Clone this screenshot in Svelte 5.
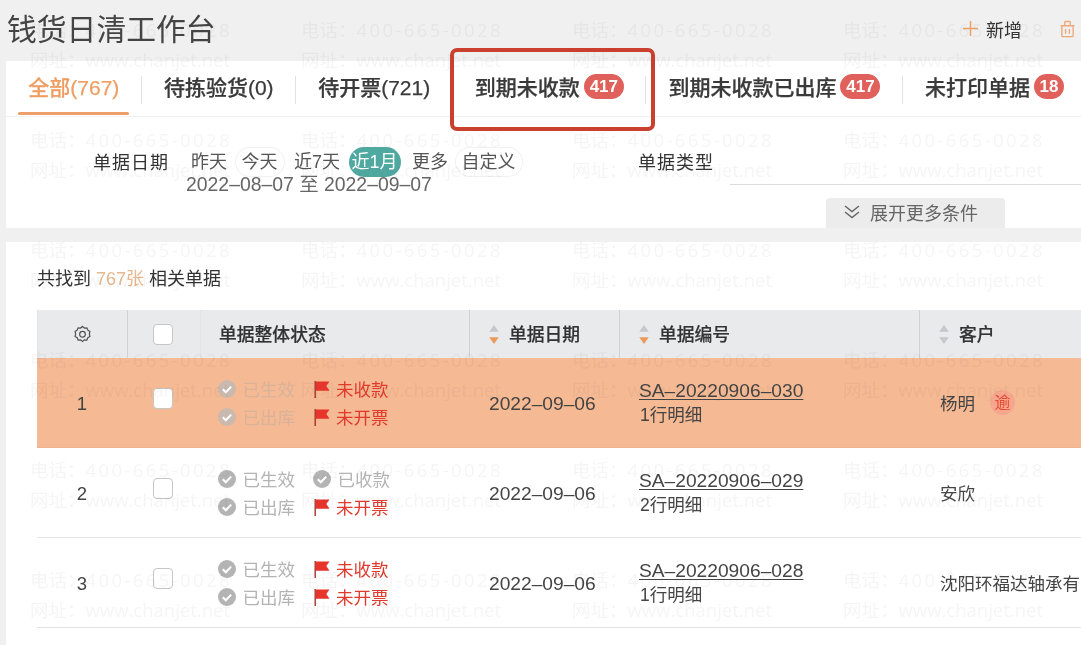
<script>
  const tabs = [
    { label: '全部(767)', active: true },
    { label: '待拣验货(0)' },
    { label: '待开票(721)', plain: true },
    { label: '到期未收款', badge: '417', boxed: true },
    { label: '到期未收款已出库', badge: '417' },
    { label: '未打印单据', badge: '18', plain: true }
  ];
  const ranges = [
    { t: '昨天' }, { t: '今天', ring: true }, { t: '近7天' },
    { t: '近1月', on: true }, { t: '更多' }, { t: '自定义', ring: true }
  ];
  const rows = [
    { n: 1, hot: true, a: ['已生效', true], b: ['未收款', false], c: ['已出库', true], d: ['未开票', false], no: 'SA–20220906–030', sub: '1行明细', cust: '杨明', late: true },
    { n: 2, a: ['已生效', true], b: ['已收款', true], c: ['已出库', true], d: ['未开票', false], no: 'SA–20220906–029', sub: '2行明细', cust: '安欣' },
    { n: 3, a: ['已生效', true], b: ['未收款', false], c: ['已出库', true], d: ['未开票', false], no: 'SA–20220906–028', sub: '1行明细', cust: '沈阳环福达轴承有限公司' }
  ];
  const marks = Array.from({ length: 24 });
</script>

{#snippet chip(item)}
  <span class="chip" class:done={item[1]} class:todo={!item[1]}>
    {#if item[1]}
      <svg class="mark" viewBox="0 0 18 18"><circle cx="9" cy="9" r="9" fill="currentColor" /><path d="M4.8 9.2l3 3 5.4-5.6" fill="none" stroke="#fff" stroke-width="2" /></svg>
    {:else}
      <svg class="mark" viewBox="0 0 18 18"><path d="M2.2 1v17" stroke="#a8322a" stroke-width="1.4" /><path d="M3 1.5h13.5l-3.2 4.6 3.2 4.6H3z" fill="#e8352b" /></svg>
    {/if}
    <span class="chip-text">{item[0]}</span>
  </span>
{/snippet}

{#snippet sorter(active)}
  <svg class="sort" viewBox="0 0 12 22">
    <path d="M6 1l5 7H1z" fill="#c4c8cc" />
    <path d="M6 21l5-7H1z" fill={active ? '#ec9a5c' : '#c4c8cc'} />
  </svg>
{/snippet}

<div class="page">
  <header class="title">
    <h1>钱货日清工作台</h1>
    <div class="actions">
      <span class="add">
        <svg viewBox="0 0 15 15" stroke="#ee9f66" stroke-width="1.5"><path d="M7.5 0v15M0 7.5h15" /></svg>
        新增
      </span>
      <svg class="trash" viewBox="0 0 16 18" fill="none" stroke="#eea877" stroke-width="1.4">
        <path d="M2 5.5h12v10.7a1 1 0 0 1-1 1H3a1 1 0 0 1-1-1zM.6 5.5h14.8M5 5.5V2a1 1 0 0 1 1-1h4a1 1 0 0 1 1 1v3.5M6 9v5M10 9v5" />
      </svg>
    </div>
  </header>

  <section class="card">
    <nav class="tabs">
      {#each tabs as tab}
        <div class="tab" class:active={tab.active} class:plain={tab.plain}>
          {tab.label}
          {#if tab.badge}<b class="badge">{tab.badge}</b>{/if}
          {#if tab.boxed}<span class="callout"></span>{/if}
        </div>
      {/each}
    </nav>

    <div class="filters">
      <span class="flabel date-label">单据日期</span>
      <div class="dates">
        <div class="ranges">
          {#each ranges as r}
            <span class="range" class:on={r.on} class:ring={r.ring}>{r.t}</span>
          {/each}
        </div>
        <div class="span">2022–08–07 至 2022–09–07</div>
      </div>
      <span class="flabel type-label">单据类型</span>
      <div class="field"></div>
    </div>

    <div class="more-row">
      <div class="more">
        <svg viewBox="0 0 16 14" fill="none" stroke="#666" stroke-width="1.4"><path d="M1 1l7 5.5L15 1M1 7l7 5.5L15 7" /></svg>
        展开更多条件
      </div>
    </div>
  </section>

  <section class="panel">
    <p class="found">共找到 <em>767张</em> 相关单据</p>
    <div class="table">
      <div class="row head">
        <div class="cell c-num">
          <svg class="gear" viewBox="0 0 20 20" fill="none" stroke="#555" stroke-width="1.3">
            <path d="M10 1.5l2 1.7 2.6-.2 1 2.4 2.2 1.4-.6 2.6.6 2.6-2.2 1.4-1 2.4-2.6-.2-2 1.7-2-1.7-2.6.2-1-2.4-2.2-1.4.6-2.6-.6-2.6 2.2-1.4 1-2.4 2.6.2z" />
            <circle cx="10" cy="9.8" r="3" />
          </svg>
        </div>
        <div class="cell c-check"><span class="box filled"></span></div>
        <div class="cell c-status"><span>单据整体状态</span></div>
        <div class="cell c-date">{@render sorter(true)}<span>单据日期</span></div>
        <div class="cell c-no">{@render sorter(true)}<span>单据编号</span></div>
        <div class="cell c-cust">{@render sorter(false)}<span>客户</span></div>
      </div>

      {#each rows as row}
        <div class="row body" class:hot={row.hot}>
          <div class="cell c-num">{row.n}</div>
          <div class="cell c-check"><span class="box" class:filled={row.hot}></span></div>
          <div class="cell c-status">
            <div class="chips">
              {@render chip(row.a)}{@render chip(row.b)}{@render chip(row.c)}{@render chip(row.d)}
            </div>
          </div>
          <div class="cell c-date num">2022–09–06</div>
          <div class="cell c-no">
            <div class="doc">
              <a href="#doc">{row.no}</a>
              <span>{row.sub}</span>
            </div>
          </div>
          <div class="cell c-cust">
            {row.cust}
            {#if row.late}<span class="late">逾</span>{/if}
          </div>
        </div>
      {/each}
    </div>
  </section>

  <div class="watermarks" aria-hidden="true">
    {#each marks as _}
      <div class="wm"><span>电话：<i>400-665-0028</i></span><span>网址：www.chanjet.net</span></div>
    {/each}
  </div>
</div>

<style>
  :global(body) {
    margin: 0;
    background: #f0f0f0;
  }
  .page {
    position: relative;
    width: 1081px;
    height: 645px;
    overflow: hidden;
    background: #f0f0f0;
    color: #333;
    font-family: "Liberation Sans", "Noto Sans CJK SC", sans-serif;
    font-size: 17.5px;
    filter: blur(0.45px);
  }
  .title {
    height: 61px;
    display: flex;
    align-items: center;
    justify-content: space-between;
    padding: 0 6px 4px 7px;
    box-sizing: border-box;
  }
  h1 {
    margin: 0 0 4px;
    font-size: 29.8px;
    font-weight: 400;
    color: #444;
  }
  .actions {
    display: flex;
    align-items: center;
    gap: 38px;
  }
  .add {
    font-size: 18px;
    color: #333;
    display: flex;
    align-items: center;
    gap: 8px;
  }
  .add svg {
    width: 15px;
    height: 15px;
  }
  .trash {
    width: 15px;
    height: 18px;
  }
  .card {
    margin-left: 6px;
    height: 167px;
    background: #fff;
  }
  .tabs {
    display: flex;
    height: 55px;
    border-bottom: 1px solid #f1f1f1;
  }
  .tab {
    position: relative;
    display: flex;
    align-items: center;
    gap: 4px;
    padding: 0 22.3px 5px;
    font-size: 21px;
    font-weight: 500;
    color: #3a3a3a;
    white-space: nowrap;
    -webkit-text-stroke: 0.25px currentColor;
  }
  .tab::after {
    content: "";
    position: absolute;
    right: 0;
    top: 15px;
    height: 28px;
    width: 1px;
    background: #e2e2e2;
  }
  .tab.plain::after {
    display: none;
  }
  .tab.active {
    color: #ef9e63;
  }
  .tab.active::before {
    content: "";
    position: absolute;
    left: 12px;
    right: 13px;
    bottom: 1px;
    height: 3px;
    background: #ec9f68;
    border-radius: 2px;
  }
  .badge {
    min-width: 40px;
    box-sizing: border-box;
    padding: 0 5px;
    height: 25px;
    line-height: 25px;
    border-radius: 13px;
    text-align: center;
    background: #e0615b;
    color: #fff;
    font-size: 17px;
    font-weight: 700;
    -webkit-text-stroke: 0;
  }
  .tab:last-child .badge {
    min-width: 30px;
  }
  .callout {
    position: absolute;
    left: -3px;
    right: -9px;
    top: -13px;
    bottom: -15px;
    border: 4px solid #c9402f;
    border-radius: 7px;
  }
  .filters {
    height: 81px;
    display: flex;
    box-sizing: border-box;
    padding: 30px 0 0 87px;
  }
  .flabel {
    font-size: 18px;
    letter-spacing: 1px;
    height: 30px;
    line-height: 30px;
    color: #333;
    padding-top: 1px;
  }
  .date-label {
    width: 91px;
  }
  .dates {
    width: 454px;
  }
  .ranges {
    display: flex;
    gap: 2.5px;
  }
  .range {
    height: 30px;
    line-height: 30px;
    box-sizing: border-box;
    padding: 0 7px;
    border-radius: 15px;
    font-size: 18px;
    color: #555;
  }
  .range:first-child {
    padding-right: 5px;
  }
  .range:last-child {
    margin-left: -3px;
  }
  .range.ring {
    box-shadow: inset 0 0 0 1px #f1f1f1;
  }
  .range.on {
    background: #4fa9a0;
    color: #fff;
    padding: 0 3px;
    margin: 0 2px 0 -1px;
  }
  .span {
    margin-top: -3px;
    padding-left: 2px;
    font-size: 19.4px;
    line-height: 20px;
    color: #666;
  }
  .type-label {
    width: 92px;
  }
  .field {
    flex: 1;
    height: 37px;
    border-bottom: 1px solid #dcdcdc;
  }
  .more-row {
    display: flex;
    justify-content: flex-end;
    padding-right: 76px;
  }
  .more {
    width: 179px;
    height: 30px;
    box-sizing: border-box;
    padding: 0 0 3px 18px;
    display: flex;
    align-items: center;
    gap: 10px;
    background: #ececec;
    border-radius: 4px 4px 0 0;
    color: #666;
    font-size: 18px;
  }
  .more svg {
    width: 16px;
    height: 14px;
  }
  .panel {
    margin: 14px 0 0 6px;
    height: 403px;
    padding-left: 31px;
    background: #fff;
  }
  .found {
    margin: 0;
    padding-top: 25px;
    height: 43px;
    line-height: 24px;
    font-size: 18px;
    color: #333;
  }
  .found em {
    font-style: normal;
    color: #e8b890;
  }
  .row {
    display: grid;
    grid-template-columns: 90px 73px 269px 150px 300px 200px;
    white-space: nowrap;
  }
  .cell {
    display: flex;
    align-items: center;
    box-sizing: border-box;
  }
  .head {
    height: 48px;
    background: #e8eaec;
    font-weight: 500;
    font-size: 17.8px;
    color: #333;
  }
  .head span:not(.box) {
    padding-bottom: 3px;
    -webkit-text-stroke: 0.2px currentColor;
  }
  .head .cell {
    border-left: 1px solid #cfd2d5;
    gap: 9px;
  }
  .head .cell:first-child,
  .head .c-status {
    border-left-color: #e2e4e6;
  }
  .body {
    height: 90px;
    border-bottom: 1px solid #e3e3e3;
    box-sizing: border-box;
    color: #444;
  }
  .hot {
    background: #f5b993;
    border-bottom-color: #f0b48f;
  }
  .c-num {
    justify-content: center;
    font-size: 18.5px;
  }
  .body .c-num {
    padding-top: 3px;
  }
  .c-check {
    justify-content: center;
    padding: 0 2px 8px 0;
  }
  .head .c-check {
    padding-bottom: 0;
  }
  .c-status {
    padding-left: 18px;
  }
  .c-date {
    padding-left: 20px;
  }
  .head .c-date,
  .head .c-no,
  .head .c-cust {
    padding-left: 18px;
  }
  .c-no {
    padding-left: 20px;
  }
  .c-cust {
    padding-left: 21px;
    gap: 15px;
  }
  .gear {
    width: 19px;
    height: 19px;
  }
  .sort {
    width: 12px;
    height: 21px;
  }
  .box {
    width: 20px;
    height: 21px;
    box-sizing: border-box;
    border: 1px solid #c6c6c6;
    border-radius: 4px;
  }
  .box.filled {
    background: #fff;
  }
  .chips {
    display: grid;
    grid-template-columns: 95px 90px;
    grid-auto-rows: 28px;
  }
  .chip {
    display: flex;
    align-items: center;
    gap: 7px;
    font-size: 17.5px;
  }
  .mark {
    width: 18px;
    height: 18px;
  }
  .done {
    color: #b4b4b4;
    gap: 6.5px;
  }
  .todo {
    color: #e03a2d;
    gap: 5px;
  }
  .hot .done {
    color: #c9b9ae;
  }
  .hot .done .chip-text {
    color: #d8b39a;
  }
  .num {
    font-size: 19.2px;
    padding-top: 3px;
  }
  .doc {
    display: flex;
    flex-direction: column;
    line-height: 25px;
    font-size: 17.5px;
  }
  .doc span {
    padding-left: 1px;
  }
  .doc a {
    color: #444;
    font-size: 19.2px;
    text-underline-offset: 2px;
  }
  .late {
    width: 25px;
    height: 25px;
    line-height: 25px;
    border-radius: 50%;
    text-align: center;
    background: #f5a78d;
    color: #e84a35;
    font-size: 16px;
  }
  .watermarks {
    position: absolute;
    inset: 0;
    pointer-events: none;
    box-sizing: border-box;
    padding: 15px 0 0 30px;
    display: grid;
    grid-template-columns: repeat(4, 271px);
    grid-auto-rows: 110px;
  }
  .wm {
    display: flex;
    flex-direction: column;
    font-family: "Open Sans", "Noto Sans CJK SC", sans-serif;
    font-size: 18.5px;
    line-height: 30px;
    color: rgba(90, 90, 90, 0.06);
    white-space: nowrap;
  }
  .wm i {
    font-style: normal;
    letter-spacing: 2.4px;
  }
</style>
